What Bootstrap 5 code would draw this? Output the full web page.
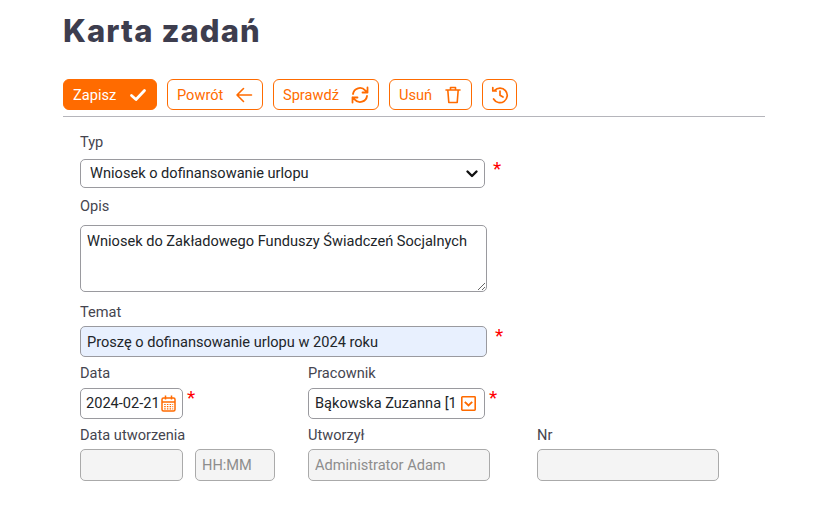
<!DOCTYPE html>
<html lang="pl">
<head>
  <meta charset="UTF-8" />
  <title>Karta zadań</title>
  <meta name="viewport" content="width=device-width, initial-scale=1" />
  <link href="https://cdn.jsdelivr.net/npm/bootstrap@5.3.0/dist/css/bootstrap.min.css" rel="stylesheet" />
  <style>
    body {
      font-family: Roboto, "Liberation Sans", sans-serif;
      font-size: 14.6px;
      color: #3f3f4d;
      background: #fff;
    }

    .page-box {
      width: 702px;
      margin-left: 63px;
    }

    .page-title {
      font-family: Inter, "Open Sans", sans-serif;
      font-weight: 800;
      font-size: 31px;
      letter-spacing: 1.1px;
      line-height: 38px;
      color: #3d3d4e;
      padding-top: 12px;
      margin-bottom: 29px;
    }

    .toolbar {
      gap: 10px;
      padding-bottom: 6px;
      border-bottom: 1px solid #b5b5bb;
    }

    .btn-tool {
      height: 31px;
      padding: 1px 9px 0;
      font-size: 14.6px;
      line-height: 29px;
      color: #ff6b00;
      background: #fff;
      border: 1px solid #ff6b00;
      border-radius: 6px;
      display: flex;
      align-items: center;
      justify-content: space-between;
    }

    .btn-tool:hover { color: #ff6b00; background: #fff; border-color: #ff6b00; }

    .btn-save { width: 94px; color: #fff; background: #ff6b00; }
    .btn-save:hover { color: #fff; background: #ff6b00; }
    .btn-back { width: 96px; }
    .btn-verify { width: 106px; }
    .btn-del { width: 83px; }
    .btn-hist { width: 35px; justify-content: center; padding: 0; }

    .form-box {
      padding-left: 17px;
    }

    .field-label {
      display: block;
      font-size: 14.6px;
      line-height: 18px;
      color: #45454f;
    }

    .label-typ { margin-top: 16px; margin-bottom: 8px; }
    .label-opis { margin-top: 9px; margin-bottom: 10px; }
    .label-temat { margin-top: 11px; margin-bottom: 5px; }
    .label-row { margin-bottom: 6px; }
    .label-low { margin-bottom: 5px; }
    .row-data { margin-top: 7px; }
    .row-low { margin-top: 7px; }

    .form-control, .form-select {
      font-size: 14.6px;
      color: #212529;
      border-color: #9a9a9f;
      border-radius: 5px;
      padding: 0 6px;
    }

    .form-select {
      height: 29px;
      width: 405px;
      padding: 0 30px 0 9px;
      background-image: url("data:image/svg+xml,%3csvg xmlns='http://www.w3.org/2000/svg' viewBox='0 0 14 10'%3e%3cpath fill='none' stroke='%23111' stroke-width='2.4' stroke-linecap='round' stroke-linejoin='round' d='M2.5 2.5l4.5 4.5 4.5-4.5'/%3e%3c/svg%3e");
      background-position: right 5px center;
      background-size: 14px 10px;
    }

    .form-control { height: 31px; }

    textarea.form-control {
      width: 407px;
      height: 67px;
      padding: 5px 6px;
    }

    .form-control.input-blue { background: #e8f0fe; width: 407px; }

    .form-control:disabled {
      background: #f4f4f4;
      color: #8d8d8d;
      height: 32px;
      border-color: #aaa;
    }

    .form-control:disabled::placeholder { color: #8d8d8d; opacity: 1; }

    .req-star {
      color: #f00;
      font-size: 19px;
      line-height: 19px;
      margin-left: 8px;
      height: 19px;
    }

    .req-near { margin-left: 4px; }

    .col-first { width: 228px; flex: none; }
    .col-next { width: 229px; flex: none; }

    .input-icon {
      height: 31px;
      border: 1px solid #9a9a9f;
      border-radius: 5px;
      padding: 0 6px 0 5px;
      color: #212529;
      white-space: nowrap;
      overflow: hidden;
    }

    .w-date { width: 103px; }
    .w-worker { width: 177px; padding-left: 6px; padding-right: 8px; }
    .w-hour { width: 80px; margin-left: 12px; }
    .w-creator { width: 182px; }
    .w-nr { width: 182px; }
  </style>
</head>
<body>

<div class="page-box">
  <h1 class="page-title">Karta zadań</h1>

  <div class="toolbar d-flex">
    <button type="button" class="btn btn-tool btn-save">
      Zapisz
      <svg width="18" height="18" viewBox="0 0 18 18" fill="none" stroke="#fff" stroke-width="2.8" stroke-linecap="round" stroke-linejoin="round"><path d="M2.5 9.5l4.5 4 8.5-9"/></svg>
    </button>
    <button type="button" class="btn btn-tool btn-back">
      Powrót
      <svg width="18" height="18" viewBox="0 0 18 18" fill="none" stroke="#ff6b00" stroke-width="1.6" stroke-linecap="round" stroke-linejoin="round"><path d="M16.5 9H2M8.5 2.5L2 9l6.5 6.5"/></svg>
    </button>
    <button type="button" class="btn btn-tool btn-verify">
      Sprawdź
      <svg width="18" height="18" viewBox="0 0 18 18" fill="none" stroke="#ff6b00" stroke-width="1.8" stroke-linecap="round" stroke-linejoin="round"><path d="M2 8a7 7 0 0 1 12.2-3.6L16.5 6.5M16.5 1.5v5h-5M16 10a7 7 0 0 1-12.2 3.6L1.5 11.5M1.5 16.5v-5h5"/></svg>
    </button>
    <button type="button" class="btn btn-tool btn-del">
      Usuń
      <svg width="18" height="18" viewBox="0 0 18 18" fill="none" stroke="#ff6b00" stroke-width="1.6" stroke-linecap="round" stroke-linejoin="round"><path d="M2 4h14M6.5 4V1.5h5V4M3.8 4l1 12.5h8.4l1-12.5"/></svg>
    </button>
    <button type="button" class="btn btn-tool btn-hist">
      <svg width="18" height="18" viewBox="0 0 18 18" fill="none" stroke="#ff6b00" stroke-width="1.7" stroke-linecap="round" stroke-linejoin="round"><path d="M3.6 4.4A7.3 7.3 0 1 1 2.6 13M1.8 1.6v3.4h3.4M9 5v4.3l3 1.8"/></svg>
    </button>
  </div>

  <form class="form-box">
    <label class="field-label label-typ">Typ</label>
    <div class="d-flex">
      <select class="form-select">
        <option>Wniosek o dofinansowanie urlopu</option>
      </select>
      <span class="req-star">*</span>
    </div>

    <label class="field-label label-opis">Opis</label>
    <textarea class="form-control">Wniosek do Zakładowego Funduszy Świadczeń Socjalnych</textarea>

    <label class="field-label label-temat">Temat</label>
    <div class="d-flex">
      <input type="text" class="form-control input-blue" value="Proszę o dofinansowanie urlopu w 2024 roku" />
      <span class="req-star">*</span>
    </div>

    <div class="d-flex row-data">
      <div class="col-first">
        <label class="field-label label-row">Data</label>
        <div class="d-flex">
          <div class="input-icon w-date d-flex align-items-center justify-content-between">
            2024-02-21
            <svg class="flex-shrink-0" width="15" height="17" viewBox="0 0 15 17" fill="none" stroke="#ff6b00" stroke-width="1.5"><rect x="1" y="3" width="13" height="13" rx="1.5"/><path d="M1 7h13M4.5 .5v4M10.5 .5v4"/><path stroke-dasharray="1.5 1.2" d="M3.2 9.5h9M3.2 11.7h9M3.2 13.9h9" stroke-width="1.2"/></svg>
          </div>
          <span class="req-star req-near">*</span>
        </div>
      </div>
      <div class="col-next">
        <label class="field-label label-row">Pracownik</label>
        <div class="d-flex">
          <div class="input-icon w-worker d-flex align-items-center justify-content-between">
            <span>Bąkowska Zuzanna [1</span>
            <svg class="flex-shrink-0" width="15" height="15" viewBox="0 0 15 15" fill="none" stroke="#ff6b00"><rect x=".8" y=".8" width="13.4" height="13.4" rx=".6" stroke-width="1.6"/><path d="M3.8 5.8l3.7 3.7 3.7-3.7" stroke-width="1.9"/></svg>
          </div>
          <span class="req-star req-near">*</span>
        </div>
      </div>
    </div>

    <div class="d-flex row-low">
      <div class="col-first">
        <label class="field-label label-low">Data utworzenia</label>
        <div class="d-flex">
          <input type="text" class="form-control w-date" disabled />
          <input type="text" class="form-control w-hour" placeholder="HH:MM" disabled />
        </div>
      </div>
      <div class="col-next">
        <label class="field-label label-low">Utworzył</label>
        <input type="text" class="form-control w-creator" value="Administrator Adam" disabled />
      </div>
      <div class="col-next">
        <label class="field-label label-low">Nr</label>
        <input type="text" class="form-control w-nr" disabled />
      </div>
    </div>
  </form>
</div>

<script src="https://cdn.jsdelivr.net/npm/bootstrap@5.3.0/dist/js/bootstrap.bundle.min.js"></script>
</body>
</html>
